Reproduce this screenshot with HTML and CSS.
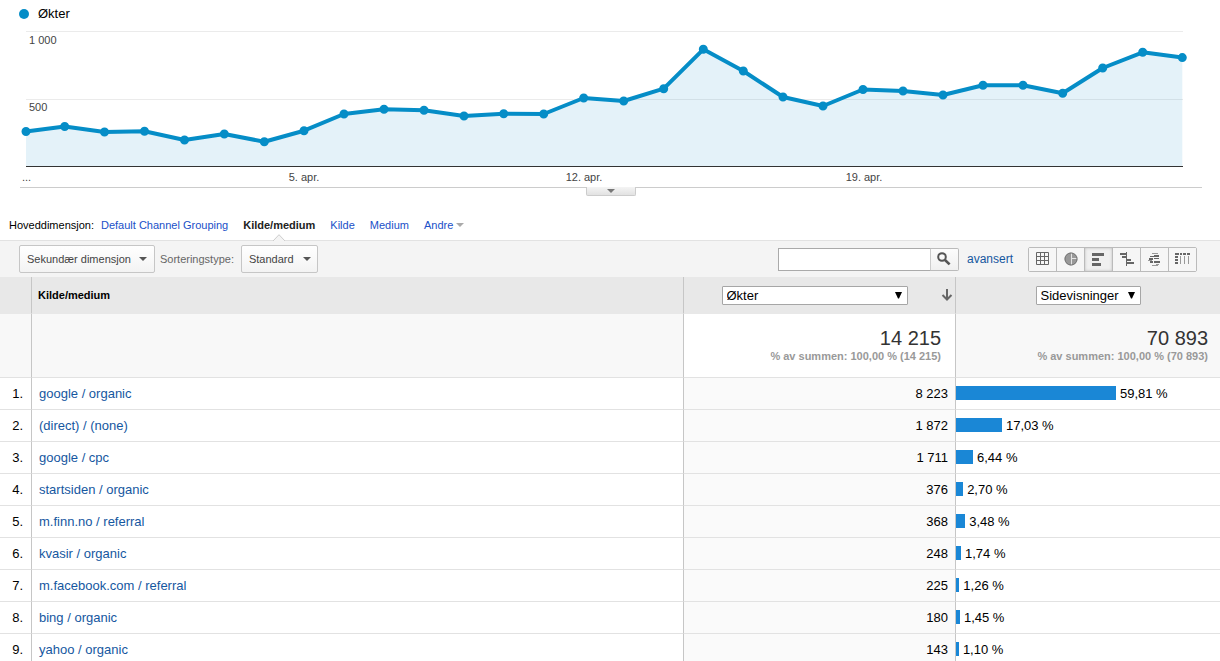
FILE: index.html
```html
<!DOCTYPE html>
<html lang="no">
<head>
<meta charset="utf-8">
<title>Kilde/medium</title>
<link rel="stylesheet" href="styles.css">
</head>
<body>
<main>
  <section class="chart">
    <div class="legend"><span class="legend-dot"></span>Økter</div>
    <svg class="plot" viewBox="20 28 1182 159" role="img" aria-label="Økter per dag">
      <path class="grid" d="M26 31.5H1183M26 99.5H1183"/>
      <path class="area" d="M26 166V131.5L64.7 126.5 104.5 132 144.5 131.3 184.5 140 224.3 134 264.3 141.7 304 130.7 344 114 384 109.3 424 110.3 464 116 503.7 113.7 543.7 114 583.7 98 623.7 101 663.7 88.7 703.3 49.3 743.3 71 783 97 823 106 863 89.5 903 91 943 95 983 85.3 1023 85.3 1062.7 93.3 1102.7 68 1142.7 52.3 1182.3 57.6V166Z"/>
      <path class="axis" d="M26 166.5H1183"/>
      <path class="line" d="M26 131.5L64.7 126.5 104.5 132 144.5 131.3 184.5 140 224.3 134 264.3 141.7 304 130.7 344 114 384 109.3 424 110.3 464 116 503.7 113.7 543.7 114 583.7 98 623.7 101 663.7 88.7 703.3 49.3 743.3 71 783 97 823 106 863 89.5 903 91 943 95 983 85.3 1023 85.3 1062.7 93.3 1102.7 68 1142.7 52.3 1182.3 57.6"/>
      <path class="dots" d="M26 131.5h0M64.7 126.5h0M104.5 132h0M144.5 131.3h0M184.5 140h0M224.3 134h0M264.3 141.7h0M304 130.7h0M344 114h0M384 109.3h0M424 110.3h0M464 116h0M503.7 113.7h0M543.7 114h0M583.7 98h0M623.7 101h0M663.7 88.7h0M703.3 49.3h0M743.3 71h0M783 97h0M823 106h0M863 89.5h0M903 91h0M943 95h0M983 85.3h0M1023 85.3h0M1062.7 93.3h0M1102.7 68h0M1142.7 52.3h0M1182.3 57.6h0"/>
      <text x="29" y="44">1 000</text>
      <text x="29" y="111">500</text>
      <text x="22" y="181">...</text>
      <text x="304" y="181" text-anchor="middle">5. apr.</text>
      <text x="584" y="181" text-anchor="middle">12. apr.</text>
      <text x="864" y="181" text-anchor="middle">19. apr.</text>
    </svg>
    <button class="handle" type="button" aria-label="Vis merknader"><span class="caret"></span></button>
  </section>

  <nav class="dimensions">
    <span class="dimensions-label">Hoveddimensjon:</span>
    <a href="#">Default Channel Grouping</a>
    <a href="#" class="current" aria-current="page">Kilde/medium
      <svg class="notch" width="12" height="7" viewBox="0 0 12 7" aria-hidden="true"><path d="M0 7L6 .7 12 7" fill="#f4f4f4" stroke="#ccc"/></svg>
    </a>
    <a href="#">Kilde</a>
    <a href="#">Medium</a>
    <a href="#" class="more">Andre <span class="caret"></span></a>
  </nav>

  <div class="toolbar">
    <button class="menu-button" type="button" aria-haspopup="true">Sekundær dimensjon <span class="caret"></span></button>
    <label class="sort-label" for="sort">Sorteringstype:</label>
    <span class="sort">
      <select id="sort"><option>Standard</option></select>
      <span class="caret"></span>
    </span>
    <form class="search">
      <input type="text" aria-label="Søk i tabellen">
      <button type="button" aria-label="Søk">
        <svg width="14" height="14" viewBox="0 0 14 14" aria-hidden="true"><circle cx="5" cy="5" r="3.8" fill="none" stroke="#555" stroke-width="2"/><path d="M8 8L12.6 12.4" stroke="#555" stroke-width="2.6"/></svg>
      </button>
    </form>
    <a class="advanced" href="#">avansert</a>
    <div class="views">
      <button type="button" aria-label="Data"><svg width="14" height="14" viewBox="0 0 14 14"><path d="M.5 .5h12v12H.5zM4.5 .5v12M8.5 .5v12M.5 4.5h12M.5 8.5h12" fill="none" stroke="#666"/></svg></button>
      <button type="button" aria-label="Prosentandel"><svg width="14" height="14" viewBox="0 0 14 14"><circle cx="7" cy="7" r="6.5" fill="#999"/><path d="M7.500 .5V13.500M7.500 6.500H13.500" stroke="#e4e4e4" fill="none"/><circle cx="7" cy="7" r="6" fill="none" stroke="#777"/></svg></button>
      <button type="button" class="active" aria-label="Resultater" aria-pressed="true"><svg width="14" height="14" viewBox="0 0 14 14"><path d="M0 1h12v3H0zM0 6h7v3H0zM0 11h9v3H0z" fill="#666"/></svg></button>
      <button type="button" aria-label="Sammenligning"><svg width="14" height="14" viewBox="0 0 14 14"><path d="M0 1h6v2H0zM6 0h1v14H6zM2 4h4v2H2zM7 7h4v2H7zM7 10h7v2H7z" fill="#666"/></svg></button>
      <button type="button" aria-label="Uttrykkssky"><svg width="14" height="14" viewBox="0 0 14 14"><path d="M2 4h4v1H2zM6 3h5v2H6zM1 6h4v2H1zM6 9h6v2H6zM2 9h3v2H2zM6 6h5v1H6z" fill="#666"/><path d="M4 1h6v1H4zM8 12h3v1H8zM4 13h6v1H4zM0 8h4v1H0z" fill="#999"/></svg></button>
      <button type="button" aria-label="Pivot"><svg width="16" height="14" viewBox="0 0 16 14"><path d="M0 1h4v2H0zM5 1h2v2H5zM8 1h3v2H8zM12 1h3v2h-3zM0 4h3v2H0zM0 7h3v2H0zM0 10h3v2H0z" fill="#666"/><path d="M5.500 4v8M9.500 4v8M13.500 4v8" stroke="#999"/></svg></button>
    </div>
  </div>

  <table>
    <colgroup><col class="col-index"><col><col class="col-sessions"><col class="col-views"></colgroup>
    <thead>
      <tr class="head">
        <th></th>
        <th scope="col" class="name">Kilde/medium</th>
        <th scope="col"><div class="metric sorted">
          <span class="picker wide"><select aria-label="Første beregning"><option>Økter</option></select><svg width="7" height="7" viewBox="0 0 7 7" aria-hidden="true"><path d="M0 0H7L4 6.500H3Z"/></svg></span>
          <svg class="sort-arrow" width="12" height="12" viewBox="0 0 12 12" aria-hidden="true"><path d="M6 0V10M1.500 6L6 10.500 10.500 6" fill="none" stroke="#666" stroke-width="2"/></svg>
        </div></th>
        <th scope="col"><div class="metric">
          <span class="picker"><select aria-label="Andre beregning"><option>Sidevisninger</option></select><svg width="7" height="7" viewBox="0 0 7 7" aria-hidden="true"><path d="M0 0H7L4 6.500H3Z"/></svg></span>
        </div></th>
      </tr>
      <tr class="summary">
        <td></td>
        <td></td>
        <td class="total primary"><strong>14 215</strong><small>% av summen: 100,00 % (14 215)</small></td>
        <td class="total"><strong>70 893</strong><small>% av summen: 100,00 % (70 893)</small></td>
      </tr>
    </thead>
    <tbody>
      <tr><td class="index">1.</td><td class="name"><a href="#">google / organic</a></td><td class="sessions">8 223</td><td><div class="share"><span class="bar" style="width:60.6%"></span>59,81 %</div></td></tr>
      <tr><td class="index">2.</td><td class="name"><a href="#">(direct) / (none)</a></td><td class="sessions">1 872</td><td><div class="share"><span class="bar" style="width:17.4%"></span>17,03 %</div></td></tr>
      <tr><td class="index">3.</td><td class="name"><a href="#">google / cpc</a></td><td class="sessions">1 711</td><td><div class="share"><span class="bar" style="width:6.44%"></span>6,44 %</div></td></tr>
      <tr><td class="index">4.</td><td class="name"><a href="#">startsiden / organic</a></td><td class="sessions">376</td><td><div class="share"><span class="bar" style="width:2.7%"></span>2,70 %</div></td></tr>
      <tr><td class="index">5.</td><td class="name"><a href="#">m.finn.no / referral</a></td><td class="sessions">368</td><td><div class="share"><span class="bar" style="width:3.48%"></span>3,48 %</div></td></tr>
      <tr><td class="index">6.</td><td class="name"><a href="#">kvasir / organic</a></td><td class="sessions">248</td><td><div class="share"><span class="bar" style="width:1.9%"></span>1,74 %</div></td></tr>
      <tr><td class="index">7.</td><td class="name"><a href="#">m.facebook.com / referral</a></td><td class="sessions">225</td><td><div class="share"><span class="bar" style="width:1.26%"></span>1,26 %</div></td></tr>
      <tr><td class="index">8.</td><td class="name"><a href="#">bing / organic</a></td><td class="sessions">180</td><td><div class="share"><span class="bar" style="width:1.5%"></span>1,45 %</div></td></tr>
      <tr><td class="index">9.</td><td class="name"><a href="#">yahoo / organic</a></td><td class="sessions">143</td><td><div class="share"><span class="bar" style="width:1.1%"></span>1,10 %</div></td></tr>
    </tbody>
  </table>
</main>
</body>
</html>
```

FILE: styles.css
```css
* { box-sizing: border-box; }
html { scrollbar-width: none; }
body {
  margin: 0;
  background: #fff;
  color: #000;
  font: 13px/16px "Liberation Sans", Arial, sans-serif;
}
a { text-decoration: none; color: #15579f; }
button, select, input { font: inherit; color: inherit; margin: 0; }
svg { display: block; }

.caret {
  display: inline-block;
  border: 4px solid transparent;
  border-top-color: currentColor;
  border-bottom: 0;
}

/* Chart */
.chart { padding: 0 18px 0 20px; }
.legend { display: flex; align-items: center; gap: 9px; height: 28px; margin-left: -1px; }
.legend-dot { width: 10px; height: 10px; border-radius: 50%; background: #058dc7; }
.plot {
  box-sizing: content-box;
  width: 100%;
  height: auto;
  overflow: visible;
  border-bottom: 1px solid #ccc;
}
.plot text { font-size: 11px; fill: #444; }
.grid { stroke: #ebebeb; fill: none; }
.area { fill: #058dc7; fill-opacity: .11; }
.axis { stroke: #333; }
.line { stroke: #058dc7; stroke-width: 4; stroke-linejoin: round; fill: none; }
.dots { stroke: #058dc7; stroke-width: 9; stroke-linecap: round; }
.handle {
  display: flex;
  justify-content: center;
  align-items: center;
  width: 50px;
  height: 9px;
  margin: -1px auto 0;
  padding: 0;
  border: 1px solid #ccc;
  border-top: 0;
  border-radius: 0 0 2px 2px;
  background: linear-gradient(#f4f4f4, #e2e2e2);
  color: #777;
}

/* Dimension tabs */
.dimensions {
  display: flex;
  gap: 15px;
  padding: 22px 9px 8px;
  font-size: 11px;
  line-height: 14px;
}
.dimensions a { color: #2050c8; }
.dimensions-label { margin-right: -8px; }
.dimensions .current { position: relative; color: #222; font-weight: bold; }
.notch { position: absolute; left: 50%; bottom: -9px; margin-left: -6px; }
.more { display: flex; align-items: center; gap: 3px; }
.more .caret { color: #aaa; }

/* Toolbar */
.toolbar {
  display: flex;
  align-items: center;
  min-height: 37px;
  padding: 0 23px 0 19px;
  border-top: 1px solid #e2e2e2;
  background: #f4f4f4;
  font-size: 11px;
  color: #444;
}
.menu-button, .sort select {
  height: 28px;
  border: 1px solid #c6c6c6;
  border-radius: 2px;
  background: linear-gradient(#fff, #f3f3f3);
}
.menu-button { display: flex; align-items: center; gap: 8px; padding: 0 7px; }
.menu-button .caret, .sort .caret { color: #555; }
.sort-label { margin: 0 7px 0 5px; color: #666; }
.sort { position: relative; }
.sort select { display: block; width: 77px; padding: 0 7px; appearance: none; }
.sort .caret { position: absolute; right: 7px; top: 12px; pointer-events: none; }
.search { display: flex; margin-left: auto; }
.search input { width: 153px; height: 23px; border: 1px solid #aaa; border-right-color: #ccc; background: #fff; }
.search button {
  display: grid;
  place-items: center;
  width: 28px;
  height: 23px;
  padding: 0;
  border: 1px solid #bbb;
  border-left: 0;
  border-radius: 0 2px 2px 0;
  background: linear-gradient(#fcfcfc, #f0f0f0);
}
.advanced { margin: 0 15px 0 8px; font-size: 12px; }
.views { display: flex; border: 1px solid #bbb; border-radius: 2px; }
.views button {
  display: grid;
  place-items: center;
  width: 28px;
  height: 23px;
  padding: 0;
  border: 0;
  border-right: 1px solid #bbb;
  background: #f6f6f6;
}
.views button:last-child { width: 27px; border-right: 0; }
.views .active { background: #f0f0f0; box-shadow: inset 0 0 3px #bbb; }

/* Report table */
table { width: 100%; table-layout: fixed; border-collapse: separate; border-spacing: 0; }
.col-index { width: 32px; }
.col-sessions { width: 272px; }
.col-views { width: 264px; }
th, td { height: 32px; padding: 0; border-bottom: 1px solid #e2e2e2; }
th:not(:last-child), td:not(:last-child) { border-right: 1px solid #c6c6c6; }
.head th { height: 37px; background: #e8e8e8; border-bottom-color: #e8e8e8; font-weight: normal; }
.head .name { padding-left: 6px; font-size: 11px; font-weight: bold; text-align: left; }
.metric { display: flex; align-items: center; justify-content: center; }
.sorted { padding: 0 2px 0 4px; }
.sort-arrow { margin-left: auto; }
.picker { position: relative; }
.picker.wide { width: 186px; margin-left: auto; }
.picker select {
  display: block;
  width: 105px;
  height: 19px;
  padding: 1px 4px 0;
  border: 1px solid #a6a6a6;
  border-radius: 1px;
  background: #fff;
  appearance: none;
}
.picker.wide select { width: 100%; }
.picker svg { position: absolute; right: 6px; top: 6px; pointer-events: none; }
.summary td { height: 64px; background: #f8f8f8; }
.summary .total { padding: 0 12px 1px 0; text-align: right; }
.summary .primary { padding-right: 14px; background: #fff; }
.total strong { display: block; font-size: 20px; line-height: 22px; font-weight: normal; color: #333; }
.total small { display: block; font-size: 11px; line-height: 14px; font-weight: bold; color: #999; }
.index { padding-right: 8px; text-align: right; }
td.name { padding-left: 7px; }
.sessions { padding-right: 7px; background: #fafafa; text-align: right; }
.share { display: flex; align-items: center; gap: 4px; }
.bar { height: 14px; margin-bottom: 2px; background: #1a87d6; }
```
